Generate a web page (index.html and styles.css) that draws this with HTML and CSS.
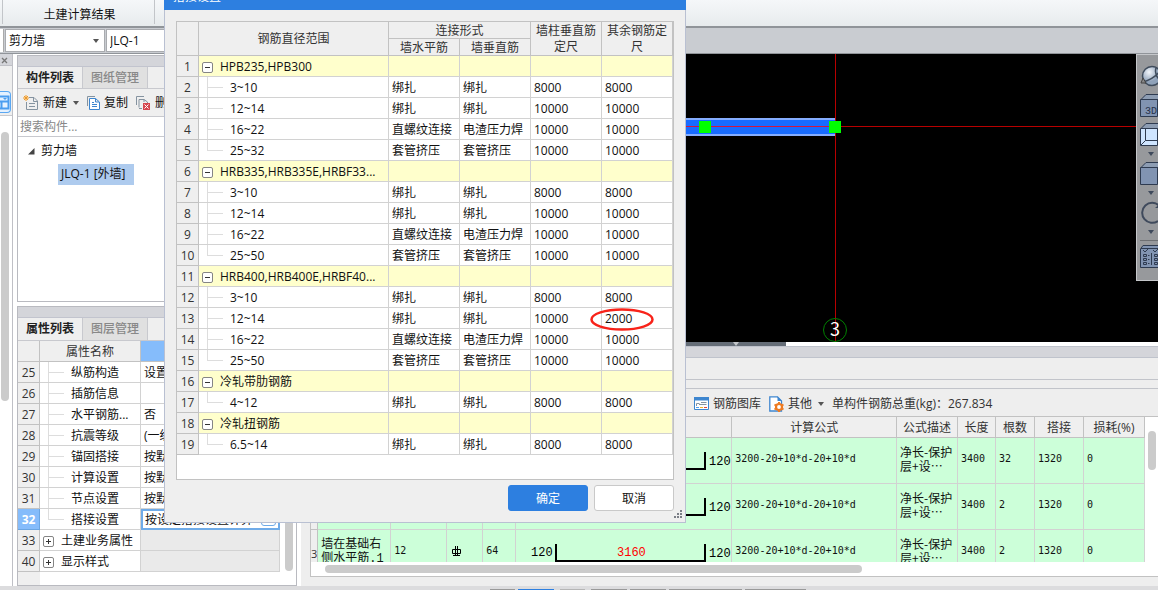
FILE: index.html
```html
<!DOCTYPE html>
<html lang="zh-CN">
<head>
<meta charset="utf-8">
<title>搭接设置</title>
<link rel="stylesheet" href="styles.css">
</head>
<body>
<div class="app">
  <header class="ribbon"><button class="ribbon-item">土建计算结果</button></header>
  <div class="selector-bar">
    <span class="selector-stub"></span>
    <label class="picker"><select aria-label="构件类型"><option>剪力墙</option></select><i class="caret"></i></label>
    <label class="picker"><select aria-label="构件"><option>JLQ-1</option></select></label>
  </div>
  <div class="workspace">
    <aside class="rail">
      <div class="rail-head"><svg width="7" height="7" viewBox="0 0 7 7"><path d="M1 1L6 6M6 1L1 6" stroke="#777" stroke-width="1.3"/></svg></div>
      <div class="rail-tools"><button class="rail-button" aria-label="视图"><svg width="10" height="15" viewBox="0 0 10 15"><path d="M0 1.5H8.500V13.500H0M0 6.500H8.500M1.500 7V13" fill="none" stroke="#4a9df0" stroke-width="2"/><path d="M3 3h4l-2 2z" fill="#4a9df0"/></svg></button></div>
      <div class="rail-list"><div class="thumb rail-thumb"></div></div>
    </aside>

    <aside class="side">
      <section class="panel components">
        <div class="panel-head"></div>
        <nav class="tabs"><button class="tab active">构件列表</button><button class="tab">图纸管理</button></nav>
        <div class="tools">
          <button class="tool"><svg width="16" height="16" viewBox="0 0 16 16"><path d="M6 2.500H11L14.500 6V14.500H3.500V7M10.500 2.500V6.500H14.500M6 8.500H12M6 11.500H12" fill="none" stroke="#8593a0"/><path d="M3 0V6M0 3H6M1 1L5 5M5 1L1 5" stroke="#f09a26"/></svg>新建<i class="caret"></i></button>
          <button class="tool"><svg width="13" height="16" viewBox="0 0 13 16"><path d="M.5 11V1.500H8" fill="none" stroke="#8593a0"/><path d="M2.500 3.500H8.500L12.500 7V14.500H2.500ZM8.500 3.500V7H12M5 7.500H7M5 9.500H10M5 11.500H10" fill="#fff" stroke="#3e86cf"/></svg>复制</button>
          <button class="tool"><svg width="15" height="16" viewBox="0 0 15 16"><path d="M.5 10V1.500H8M3 12.500V4.500H8L11.500 7V8M3 13.500H6M8 4.500V7" fill="none" stroke="#8593a0"/><path d="M7 8h7v7H7z" fill="#d6454d"/><path d="M8.500 9.500L12.500 13.500M12.500 9.500L8.500 13.500" stroke="#fff"/></svg>删除</button>
        </div>
        <input class="search" type="text" aria-label="搜索构件" placeholder="搜索构件...">
        <div class="tree">
          <div class="tree-root"><svg width="7" height="7" viewBox="0 0 7 7"><path d="M6.500 0V6.500H0Z" fill="#444"/></svg>剪力墙</div>
          <div class="tree-leaf">JLQ-1 [外墙]</div>
        </div>
      </section>
      <section class="panel properties">
        <div class="panel-head"></div>
        <nav class="tabs"><button class="tab active">属性列表</button><button class="tab">图层管理</button></nav>
        <div class="prop-body">
          <table class="grid prop-grid">
            <colgroup><col class="c-num"><col class="c-name"><col></colgroup>
            <thead><tr><th></th><th>属性名称</th><th class="picked"></th></tr></thead>
            <tbody>
              <tr><th>25</th><td class="child">纵筋构造</td><td>设置</td></tr>
              <tr><th>26</th><td class="child">插筋信息</td><td></td></tr>
              <tr><th>27</th><td class="child">水平钢筋...</td><td>否</td></tr>
              <tr><th>28</th><td class="child">抗震等级</td><td>(一级</td></tr>
              <tr><th>29</th><td class="child">锚固搭接</td><td>按默认</td></tr>
              <tr><th>30</th><td class="child">计算设置</td><td>按默认</td></tr>
              <tr><th>31</th><td class="child">节点设置</td><td>按默认</td></tr>
              <tr class="current"><th>32</th><td class="child last">搭接设置</td><td class="editing"><div class="edit-row">按设定搭接设置计算<button class="more" aria-label="更多"></button></div></td></tr>
              <tr class="closed"><th>33</th><td class="group"><button class="fold plus" aria-label="展开"></button>土建业务属性</td><td></td></tr>
              <tr class="closed"><th>40</th><td class="group"><button class="fold plus" aria-label="展开"></button>显示样式</td><td></td></tr>
            </tbody>
          </table>
          <div class="prop-scroll"><div class="thumb"></div></div>
        </div>
      </section>
    </aside>

    <main class="main">
      <div class="canvas">
        <svg class="drawing" width="100%" height="288">
          <rect x="0" y="64" width="535" height="18" fill="#85adff"/>
          <rect x="0" y="66" width="534" height="14" fill="#176bff"/>
          <path d="M0 72.500H2000M534.500 0V288" stroke="#b80000"/>
          <path d="M0 72.500H534" stroke="#d4143c"/>
          <rect x="398" y="67" width="12" height="12" fill="#0f0"/>
          <rect x="528" y="67" width="12" height="12" fill="#0f0"/>
          <circle cx="534" cy="276" r="11.500" fill="none" stroke="#008000"/>
          <text x="534" y="282" text-anchor="middle" class="axis">3</text>
        </svg>
        <div class="view-tools">
          <button aria-label="动态观察"><svg width="26" height="22" viewBox="0 0 26 22"><defs><radialGradient id="ball" cx=".35" cy=".3"><stop offset="0" stop-color="#f2f6fb"/><stop offset="1" stop-color="#8fa2b9"/></radialGradient></defs><circle cx="12" cy="11" r="9.500" fill="url(#ball)" stroke="#3f4c5c" stroke-width="1.500"/><path d="M3 17Q14 14 20 6M16 3Q14 10 20 15" fill="none" stroke="#3f4c5c" stroke-width="1.500"/><path d="M1 18L3 13L6 18Z" fill="#888" stroke="#444"/></svg></button>
          <button aria-label="三维"><svg width="26" height="24" viewBox="0 0 26 24"><path d="M1 5.500L6 .5H26V5.500Z" fill="#8d9db3" stroke="#2e3b50"/><path d="M.5 5.500H17.500V22.500H.5Z" fill="#8194b2" stroke="#2e3b50"/><text x="5" y="20" class="cube-label">3D</text></svg></button>
          <button aria-label="俯视"><svg width="26" height="24" viewBox="0 0 26 24"><path d="M1 5.500L6 .5H26V5.500Z" fill="#8d9db3" stroke="#2e3b50"/><path d="M.5 5.500H17.500V22.500H.5Z" fill="#cfe5ff" stroke="#2e3b50"/><path d="M5.500 5.500V17.500H17.500M5.500 17.500L1 22" fill="none" stroke="#2e3b50"/></svg></button>
          <i class="caret"></i>
          <button aria-label="实体"><svg width="26" height="24" viewBox="0 0 26 24"><path d="M1 5.500L6 .5H26V5.500Z" fill="#8d9db3" stroke="#2e3b50"/><path d="M.5 5.500H17.500V22.500H.5Z" fill="#8194b2" stroke="#2e3b50"/></svg></button>
          <i class="caret"></i>
          <button aria-label="旋转"><svg width="26" height="24" viewBox="0 0 26 24"><path d="M19 4.500A10 10 0 1 0 18 20" fill="none" stroke="#3f4a5c" stroke-width="2"/><path d="M15 7h6v-5z" fill="#3f4a5c"/></svg></button>
          <i class="caret"></i>
          <hr>
          <button aria-label="显示设置"><svg width="26" height="24" viewBox="0 0 26 24"><path d="M.5 4L3 .5H26V22.500H.5Z" fill="#8194b2" stroke="#2e3b50"/><path d="M1 3.500H26M3 5l2 2 3-3M13 5l2 2 3-3M3.500 9.500h3v2h-3zM3.500 13.500h3v2h-3zM3.500 17.500h3v2h-3zM14.500 9.500h3v2h-3zM14.500 13.500h3v2h-3zM14.500 17.500h3v2h-3zM8 10.500h1.500M8 14.500h1.500M8 18.500h1.500M11.500 8V20" fill="none" stroke="#2e3b50"/></svg></button>
        </div>
      </div>
      <div class="splitter"><div class="splitter-grip"><i class="caret"></i></div></div>
      <section class="rebar">
        <div class="rebar-head"></div>
        <div class="rebar-title"></div>
        <div class="rebar-gap"></div>
        <div class="rebar-tools">
          <button class="tool"><svg width="15" height="13" viewBox="0 0 15 13"><path d="M.5.500H14.500V12.500H.5Z" fill="#fff" stroke="#3e86cf"/><path d="M0 0H15V3.500H0Z" fill="#3e86cf"/><path d="M2.500 9V6.500H5.500M7 5.500H12.500M5 7.500H12.500" fill="none" stroke="#8593a0"/><path d="M2 10.500H5" stroke="#4a9df0"/><path d="M6 10.500H9" stroke="#f2b52a"/><path d="M10 10.500H13" stroke="#e0433c"/></svg>钢筋图库</button>
          <button class="tool"><svg width="15" height="16" viewBox="0 0 15 16"><path d="M.8.800H8.500L12.500 5V15H.8Z" fill="#fff" stroke="#3e86cf" stroke-width="1.300"/><path d="M8.500.500V5H13Z" fill="#3e86cf"/><circle cx="10" cy="11" r="3" fill="#fff" stroke="#ee7b22" stroke-width="2.200"/><path d="M10 6V7.500M10 14.500V16M5.500 8.500L7 9.500M13 12.500L14.500 13.500M5.500 13.500L7 12.500M13 9.500L14.500 8.500" stroke="#ee7b22" stroke-width="2"/></svg>其他<i class="caret"></i></button>
          <span>单构件钢筋总重(kg)：267.834</span>
        </div>
        <div class="rebar-body">
          <div class="rebar-scroll">
            <table class="grid rebar-grid">
              <colgroup><col class="w7"><col class="w73"><col class="w56"><col class="w36"><col class="w33"><col class="w216"><col><col class="w61"><col class="w38"><col class="w39"><col class="w49"><col class="w61"></colgroup>
              <thead><tr><th></th><th></th><th></th><th></th><th></th><th></th><th>计算公式</th><th>公式描述</th><th>长度</th><th>根数</th><th>搭接</th><th>损耗(%)</th></tr></thead>
              <tbody>
                <tr><th></th><td></td><td></td><td></td><td></td><td class="shape"><svg width="215" height="45"><path d="M40 14V31H189V14" class="bar"/><text x="193" y="27">120</text></svg></td><td>3200-20+10*d-20+10*d</td><td>净长-保护层+设…</td><td>3400</td><td>32</td><td>1320</td><td>0</td></tr>
                <tr><th></th><td></td><td></td><td></td><td></td><td class="shape"><svg width="215" height="45"><path d="M40 14V31H189V14" class="bar"/><text x="193" y="27">120</text></svg></td><td>3200-20+10*d-20+10*d</td><td>净长-保护层+设…</td><td>3400</td><td>2</td><td>1320</td><td>0</td></tr>
                <tr><th>3</th><td>墙在基础右侧水平筋.1</td><td>12</td><td><svg class="bar-mark" width="10" height="10" viewBox="0 0 10 10"><path d="M.5 3.500H8.500V7.500H.5ZM3.500 0V9.500M5.500 0V9.500M1 9.500H8" fill="none" stroke="#000"/></svg></td><td>64</td><td class="shape"><svg width="215" height="45"><path d="M40 14V31H189V14" class="bar"/><text x="15" y="26">120</text><text x="101" y="26" class="length">3160</text><text x="193" y="27">120</text></svg></td><td>3200-20+10*d-20+10*d</td><td>净长-保护层+设…</td><td>3400</td><td>2</td><td>1320</td><td>0</td></tr>
              </tbody>
            </table>
            <div class="rebar-vscroll"><div class="thumb"></div></div>
          </div>
          <div class="rebar-hscroll"><div class="thumb"></div></div>
        </div>
      </section>
    </main>
  </div>
  <footer class="taskbar"><i class="t25"></i><i class="t36 on"></i><i class="t25 dim"></i><i class="t36"></i><i class="t36"></i><i class="t73"></i><i class="t61"></i></footer>
</div>

<div class="dialog" role="dialog" aria-labelledby="dialog-title">
  <div class="dialog-title" id="dialog-title">搭接设置</div>
  <div class="dialog-body">
    <div class="lap-box">
      <table class="grid lap-grid">
        <colgroup><col class="c-num"><col><col class="w71"><col class="w71"><col class="w71"><col class="w71"></colgroup>
        <thead>
          <tr><th rowspan="2"></th><th rowspan="2">钢筋直径范围</th><th colspan="2">连接形式</th><th rowspan="2">墙柱垂直筋定尺</th><th rowspan="2">其余钢筋定尺</th></tr>
          <tr><th>墙水平筋</th><th>墙垂直筋</th></tr>
        </thead>
        <tbody>
          <tr class="head"><th>1</th><td class="group"><button class="fold" aria-label="折叠"></button>HPB235,HPB300</td><td></td><td></td><td></td><td></td></tr>
          <tr><th>2</th><td class="child">3~10</td><td>绑扎</td><td>绑扎</td><td>8000</td><td>8000</td></tr>
          <tr><th>3</th><td class="child">12~14</td><td>绑扎</td><td>绑扎</td><td>10000</td><td>10000</td></tr>
          <tr><th>4</th><td class="child">16~22</td><td>直螺纹连接</td><td>电渣压力焊</td><td>10000</td><td>10000</td></tr>
          <tr><th>5</th><td class="child last">25~32</td><td>套管挤压</td><td>套管挤压</td><td>10000</td><td>10000</td></tr>
          <tr class="head"><th>6</th><td class="group"><button class="fold" aria-label="折叠"></button>HRB335,HRB335E,HRBF33...</td><td></td><td></td><td></td><td></td></tr>
          <tr><th>7</th><td class="child">3~10</td><td>绑扎</td><td>绑扎</td><td>8000</td><td>8000</td></tr>
          <tr><th>8</th><td class="child">12~14</td><td>绑扎</td><td>绑扎</td><td>10000</td><td>10000</td></tr>
          <tr><th>9</th><td class="child">16~22</td><td>直螺纹连接</td><td>电渣压力焊</td><td>10000</td><td>10000</td></tr>
          <tr><th>10</th><td class="child last">25~50</td><td>套管挤压</td><td>套管挤压</td><td>10000</td><td>10000</td></tr>
          <tr class="head"><th>11</th><td class="group"><button class="fold" aria-label="折叠"></button>HRB400,HRB400E,HRBF40...</td><td></td><td></td><td></td><td></td></tr>
          <tr><th>12</th><td class="child">3~10</td><td>绑扎</td><td>绑扎</td><td>8000</td><td>8000</td></tr>
          <tr><th>13</th><td class="child">12~14</td><td>绑扎</td><td>绑扎</td><td>10000</td><td class="marked">2000<svg class="mark" width="64" height="23" viewBox="0 0 64 23"><ellipse cx="32" cy="11.500" rx="30.500" ry="10" fill="none" stroke="#f8231a" stroke-width="2.500"/></svg></td></tr>
          <tr><th>14</th><td class="child">16~22</td><td>直螺纹连接</td><td>电渣压力焊</td><td>10000</td><td>10000</td></tr>
          <tr><th>15</th><td class="child last">25~50</td><td>套管挤压</td><td>套管挤压</td><td>10000</td><td>10000</td></tr>
          <tr class="head"><th>16</th><td class="group"><button class="fold" aria-label="折叠"></button>冷轧带肋钢筋</td><td></td><td></td><td></td><td></td></tr>
          <tr><th>17</th><td class="child last">4~12</td><td>绑扎</td><td>绑扎</td><td>8000</td><td>8000</td></tr>
          <tr class="head"><th>18</th><td class="group"><button class="fold" aria-label="折叠"></button>冷轧扭钢筋</td><td></td><td></td><td></td><td></td></tr>
          <tr><th>19</th><td class="child last">6.5~14</td><td>绑扎</td><td>绑扎</td><td>8000</td><td>8000</td></tr>
        </tbody>
      </table>
    </div>
    <div class="dialog-actions"><button class="btn primary">确定</button><button class="btn">取消</button></div>
  </div>
  <svg class="grip" width="9" height="9" viewBox="0 0 9 9"><path d="M6 0h2v2H6zM3 3h2v2H3zM6 3h2v2H6zM0 6h2v2H0zM3 6h2v2H3zM6 6h2v2H6z" fill="#7b7f87"/></svg>
</div>
</body>
</html>
```
FILE: styles.css
```css
* { box-sizing: border-box; }
body {
  margin: 0;
  overflow: hidden;
  font: 12px/20px "Open Sans", "Noto Sans CJK SC", sans-serif;
  color: #111;
  background: #eee;
}
button, input, select { font: inherit; color: inherit; margin: 0; padding: 0; border: 0; background: none; }
svg { display: block; flex: none; }
.app { display: flex; flex-direction: column; height: 100vh; }

.caret { flex: none; border: 3px solid transparent; border-top: 4px solid #555; border-bottom: 0; }
.thumb { background: #cbcbcb; border-radius: 4px; }

/* top bars */
.ribbon {
  flex: none; height: 28px; padding-left: 2px;
  background: linear-gradient(#f5f7f9, #e7ebed);
  border-bottom: 2px solid #909499;
}
.ribbon-item { width: 153px; height: 24px; padding: 6px 0 0 2px; border: solid #c2c5c9; border-width: 0 1px; line-height: 18px; }
.selector-bar {
  flex: none; display: flex; gap: 1px; height: 26px; padding-top: 1px;
  background: #c9ccd1; border-bottom: 1px solid #909499;
}
.selector-stub { width: 4px; height: 23px; background: #fff; border-right: 1px solid #aaa; }
.picker {
  display: flex; align-items: center; width: 100px; height: 23px; padding: 0 5px 0 3px;
  background: #fff; border: 1px solid #a9abaf;
}
.picker select { flex: 1; appearance: none; outline: 0; }

.workspace { flex: 1; min-height: 0; display: flex; background: #fff; }

/* left rail */
.rail { width: 13px; display: flex; flex-direction: column; border-right: 1px solid #bfc0c6; }
.rail-head { height: 12px; padding: 3px 0 0 1px; background: #d4d5da; border-bottom: 1px solid #bfc0c6; }
.rail-tools { height: 50px; padding-top: 25px; background: #efefef; border-bottom: 1px solid #c8c9ce; }
.rail-button { display: flex; align-items: center; width: 11px; height: 22px; background: #e4f1ff; border: 1px solid #5aa7f2; border-left: 0; border-radius: 0 4px 4px 0; }
.rail-list { flex: 1; padding: 16px 3px 0 1px; }
.rail-thumb { height: 269px; }

/* side panels */
.side { width: 280px; margin: 1px 4px 0; display: flex; flex-direction: column; gap: 4px; }
.panel { display: flex; flex-direction: column; border: 1px solid #b9bac0; }
.components { height: 247px; }
.properties { flex: 1; min-height: 0; }
.panel-head { flex: none; height: 11px; background: #d4d5da; border-bottom: 1px solid #c2c4ce; }
.tabs { flex: none; display: flex; height: 22px; background: #efefef; border-bottom: 1px solid #c8c9ce; }
.properties .tabs { height: 23px; }
.tab { width: 65px; padding: 0; color: #888; background: #e0e0e0; border-right: 1px solid #c8c9ce; font-weight: 500; }
.tab.active { color: #222; background: #efefef; font-weight: 700; }
.tools { flex: none; display: flex; gap: 8px; height: 28px; padding: 1px 0 0 5px; background: #efefef; border-bottom: 1px solid #c8c9ce; overflow: hidden; }
.tool { display: flex; align-items: center; gap: 4px; white-space: nowrap; }
.tool .caret { margin-left: 2px; }
.search { height: 20px; padding: 0 2px; background: #fff; border-bottom: 1px solid #c8c9ce; outline: 0; }
.search::placeholder { color: #888; opacity: 1; }
.tree { padding: 4px 0 0 10px; }
.tree-root { display: flex; align-items: center; gap: 6px; }
.tree-leaf { width: 76px; height: 21px; margin: 3px 0 0 30px; padding-left: 3px; background: #aecbee; white-space: nowrap; }

/* data grids */
.grid { border-collapse: separate; border-spacing: 0; table-layout: fixed; }
.grid th, .grid td {
  height: 21px; padding: 2px 0 0; line-height: 18px; border: solid #d2d2d2; border-width: 0 1px 1px 0;
  overflow: hidden; white-space: nowrap;
}
.grid th { font-weight: 400; color: #333; background: #efefef; border-color: #c2c2c2; text-align: center; }
.grid td { padding-left: 3px; }
.grid .child {
  padding-left: 31px;
  background: linear-gradient(#ddd, #ddd) 8px 0 / 1px 100% no-repeat, linear-gradient(#ddd, #ddd) 8px 10px / 16px 1px no-repeat;
}
.grid .last { background-size: 1px 10px, 16px 1px; }
.fold {
  display: inline-block; width: 11px; height: 11px; margin-right: 7px; vertical-align: -1px;
  border: 1px solid #858585; border-radius: 2px;
  background: linear-gradient(#333, #333) center / 5px 1px no-repeat, #fff;
}
.fold.plus { background: linear-gradient(#333, #333) center / 5px 1px no-repeat, linear-gradient(#333, #333) center / 1px 5px no-repeat, #fff; }
.c-num { width: 22px; }
.c-name { width: 101px; }

.prop-body { flex: 1; display: flex; min-height: 0; background: linear-gradient(#efefef, #efefef) 0 0 / 22px 100% no-repeat, #fff; }
.prop-grid { width: 262px; height: 231px; }
.prop-grid .picked { background: #85bcfb; }
.prop-grid .current th { color: #fff; background: #85bcfb; border-color: #6aa5e2; font-weight: 700; }
.prop-grid .editing { padding: 0 2px; border: 2px solid #6fabe8; line-height: 17px; }
.prop-grid td { background-color: #fff; }
.prop-grid .child { background-color: #fff; }
.prop-grid .closed td:last-child { background: #eaeaea; }
.edit-row { display: flex; justify-content: space-between; }
.more { width: 15px; height: 15px; background: #fff; border: 1px solid #6fabe8; border-radius: 3px; }
.prop-scroll { flex: 1; padding: 1px 3px 14px 5px; }
.prop-scroll .thumb { height: 100%; }

/* drawing area */
.main { flex: 1; min-width: 0; display: flex; flex-direction: column; background: #eee; }
.canvas { position: relative; flex: none; height: 288px; background: #000; }
.axis { font: 18px "Noto Sans CJK SC", sans-serif; fill: #fff; }
.cube-label { font: 10px "Liberation Mono", monospace; fill: #26324a; }
.view-tools {
  position: absolute; top: 0; right: 0; width: 22px; height: 227px; padding: 10px 0 0 3px;
  display: flex; flex-direction: column; overflow: hidden;
  background: #97999c; border: solid #c5c7ca; border-width: 1px 0 1px 1px;
}
.view-tools button { flex: none; display: block; width: 26px; }
.view-tools button:first-child { margin-bottom: 7px; }
.view-tools button:nth-child(2) { margin-bottom: 5px; }
.view-tools .caret { width: 6px; margin: 5px 0 6px 8px; border-top-color: #3f4a5c; }
.view-tools hr { width: 100%; margin: 0 0 4px; border: 0; border-top: 1px solid #6d6f72; }
.splitter { flex: none; height: 4px; background: #fff; }
.splitter-grip { width: 485px; height: 4px; padding-left: 432px; background: #656d77; }
.splitter-grip .caret { display: block; width: 6px; border-top-color: #c3c6ca; }

/* rebar table */
.rebar { flex: 1; min-height: 0; display: flex; flex-direction: column; }
.rebar-head { flex: none; height: 12px; background: #d4d5da; border: solid #bfc3cc; border-width: 1px 0; }
.rebar-title { flex: none; height: 22px; border-bottom: 1px solid #c2c4ca; }
.rebar-gap { flex: none; height: 9px; border-bottom: 1px solid #c2c4ca; }
.rebar-tools { flex: none; display: flex; align-items: center; gap: 8px; height: 27px; padding: 2px 0 0 393px; color: #333; white-space: nowrap; }
.rebar-body { display: flex; flex-direction: column; height: 161px; margin-left: 9px; background: #fff; border: solid #c2c2c2; border-width: 1px 0 1px 1px; }
.rebar-scroll { display: flex; height: 145px; overflow: hidden; }
.rebar-grid { flex: 1; min-width: 0; height: 159px; }
.rebar-grid tbody td {
  height: 46px; padding: 0 0 3px 3px; background: #ccffd9; white-space: normal;
  font: 10px/14px "DejaVu Sans Mono", "Noto Sans CJK SC", monospace;
}
.rebar-grid tbody td:nth-child(2) { padding-bottom: 1px; font: 12px/14px "Liberation Mono", "Noto Sans CJK SC", monospace; }
.rebar-grid tbody td:nth-child(8) { font: 12px/14px "Noto Sans CJK SC", sans-serif; }
.rebar-grid tbody th { font-size: 11px; }
.rebar-grid tbody td.shape { padding: 0; font: 12px "Liberation Mono", monospace; }
.bar-mark { margin-left: 2px; }
.bar { fill: none; stroke: #000; stroke-width: 2; }
.length { fill: #f00; }
.rebar-vscroll { width: 13px; padding: 14px 2px 0 3px; }
.rebar-vscroll .thumb { height: 39px; }
.rebar-hscroll { padding: 3px 296px 0 14px; }
.rebar-hscroll .thumb { height: 8px; }
.w7 { width: 7px; } .w33 { width: 33px; } .w36 { width: 36px; } .w38 { width: 38px; } .w39 { width: 39px; }
.w49 { width: 49px; } .w56 { width: 56px; } .w61 { width: 61px; } .w71 { width: 71px; } .w73 { width: 73px; } .w216 { width: 216px; }

.taskbar { flex: none; display: flex; align-items: flex-end; gap: 3px; height: 4px; padding-left: 490px; background: #dcdcde; }
.taskbar i { height: 1px; background: #999; }
.taskbar .on { background: #2d7fe0; }
.taskbar .dim { margin: 0 3px; background: #b5b5b5; }
.t25 { width: 25px; } .t36 { width: 36px; } .t61 { width: 61px; } .t73 { width: 73px; }

/* lap settings dialog */
.dialog { position: absolute; top: -23px; left: 164px; width: 522px; background: #efefef; border: 1px solid #b9c0d2; border-top: 0; }
.dialog-title { height: 33px; margin: 0 -1px; padding: 10px 9px 0; color: #fff; background: #2d7fe0; }
.dialog-body { padding: 11px; }
.lap-box { padding-bottom: 24px; background: #fff; border: 1px solid #c2c2c2; }
.lap-grid { width: 100%; }
.lap-grid thead th { height: 17px; padding-top: 1px; line-height: 15px; white-space: normal; }
.lap-grid thead th[rowspan] { line-height: 16px; }
.lap-grid .head td { background: #ffffcc; }
.grid td.marked { position: relative; overflow: visible; }
.mark { position: absolute; top: 0; left: -12px; }
.dialog-actions { display: flex; justify-content: flex-end; gap: 6px; padding-top: 5px; }
.btn { width: 80px; height: 26px; padding-top: 1px; background: #fff; border: 1px solid #c9c9c9; border-radius: 3px; }
.btn.primary { color: #fff; background: #2d7fe0; border-color: #2d7fe0; }
.grip { position: absolute; right: 2px; bottom: 3px; }
```
